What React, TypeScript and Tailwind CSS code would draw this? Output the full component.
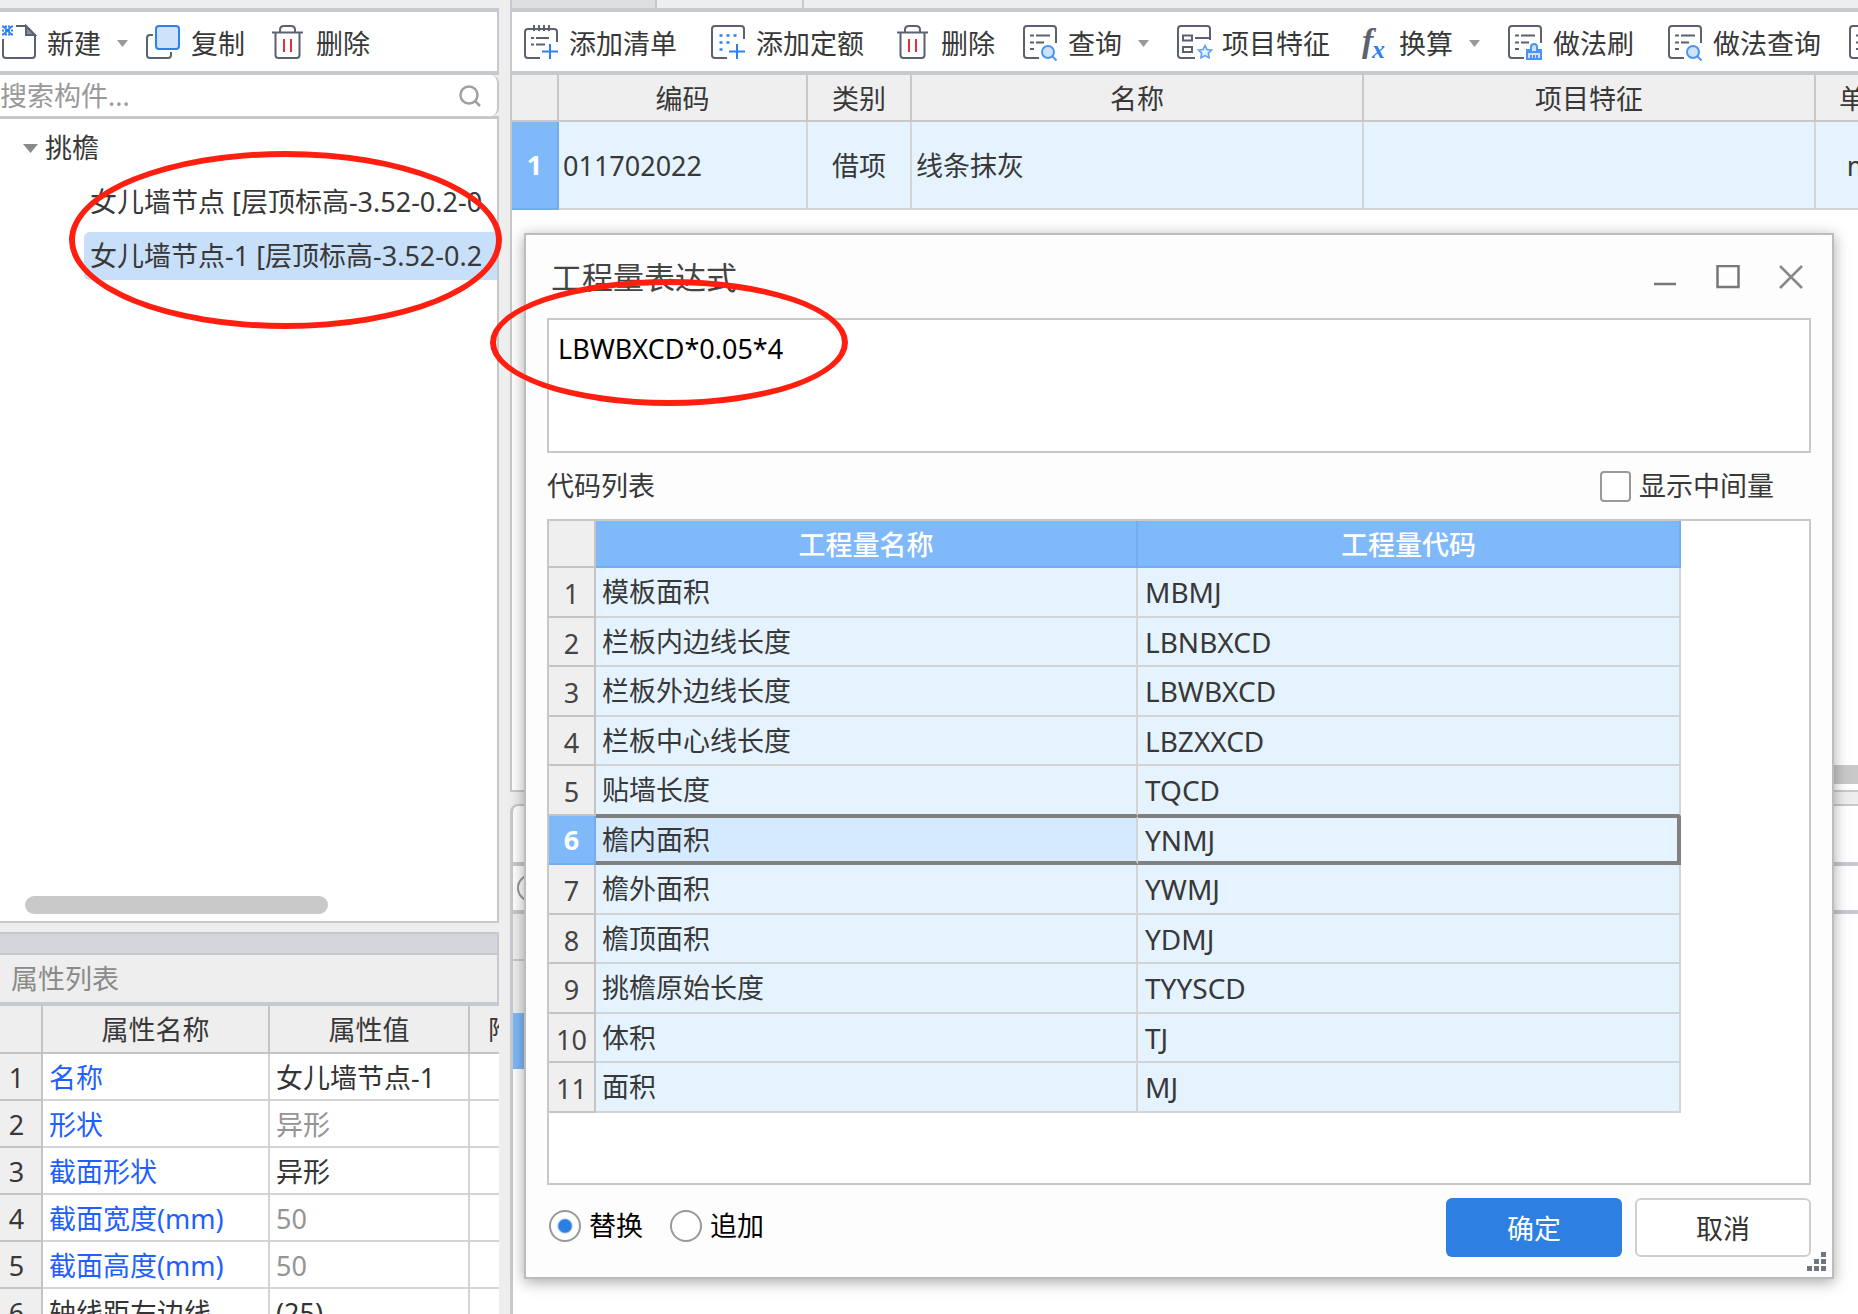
import React, { useState } from 'react'

const codes = [
    ['模板面积', 'MBMJ'],
    ['栏板内边线长度', 'LBNBXCD'],
    ['栏板外边线长度', 'LBWBXCD'],
    ['栏板中心线长度', 'LBZXXCD'],
    ['贴墙长度', 'TQCD'],
    ['檐内面积', 'YNMJ'],
    ['檐外面积', 'YWMJ'],
    ['檐顶面积', 'YDMJ'],
    ['挑檐原始长度', 'TYYSCD'],
    ['体积', 'TJ'],
    ['面积', 'MJ'],
]

const attributes = [
    { name: '名称', value: '女儿墙节点-1', nameColor: 'text-[#1f5fff]', valueColor: 'text-[#333]' },
    { name: '形状', value: '异形', nameColor: 'text-[#1f5fff]', valueColor: 'text-[#949494]' },
    { name: '截面形状', value: '异形', nameColor: 'text-[#1f5fff]', valueColor: 'text-[#333]' },
    { name: '截面宽度(mm)', value: '50', nameColor: 'text-[#1f5fff]', valueColor: 'text-[#949494]' },
    { name: '截面高度(mm)', value: '50', nameColor: 'text-[#1f5fff]', valueColor: 'text-[#949494]' },
    { name: '轴线距左边线', value: '(25)', nameColor: 'text-[#333]', valueColor: 'text-[#333]' },
]

const Svg: React.FC<{ children: React.ReactNode }> = ({ children }) => (
    <svg className="w-[34px] h-[34px] shrink-0 overflow-visible" viewBox="0 0 34 34" fill="none" stroke="#5b6170" strokeWidth="2">
        {children}
    </svg>
)

const NewIcon = () => (
    <Svg>
        <path d="M1 14v16q0 3 3 3h26q3 0 3-3V11L24 1H14" />
        <path d="M24 1v9h9z" fill="#8b909b" />
        <path d="M0 1.500h11M0 5.500h11M0 9.500h11" stroke="#2b82ee" strokeWidth="2" strokeDasharray="2 1" />
        <path d="M1.500 1.500l8 8M9.500 1.500l-8 8" stroke="#2b82ee" strokeWidth="1.800" />
    </Svg>
)

const CopyIcon = () => (
    <Svg>
        <path d="M7 10H4q-3 0-3 3v17q0 3 3 3h18q3 0 3-3v-3" />
        <rect x="10" y="1" width="23" height="23" rx="3" fill="#cfe2fb" stroke="#2b82ee" />
    </Svg>
)

const TrashIcon = () => (
    <Svg>
        <path d="M9 7V5q0-4 4-4h7q4 0 4 4v2M1 7.500h31M4.500 8v22q0 3 3 3h18q3 0 3-3V8" />
        <path d="M13 14v13M20 14v13" stroke="#e8303a" />
    </Svg>
)

const AddListIcon = () => (
    <Svg>
        <path d="M33 17V7q0-3-3-3H4Q1 4 1 7v23q0 3 3 3h12M10 0v6M15 0v6M20 0v6M25 0v6" />
        <path d="M7 13h3M12 13h13M7 19.500h3M12 19.500h9" />
        <path d="M26 19v15M18 26.500h16" stroke="#2b82ee" />
    </Svg>
)

const AddQuotaIcon = () => (
    <Svg>
        <path d="M33 14V4q0-3-3-3H4Q1 1 1 4v26q0 3 3 3h12" />
        <path d="M8.500 10.500h3M15.500 10.500h3M22.500 10.500h3M8.500 17.500h3M15.500 17.500h3M8.500 24.500h3" stroke="#2b82ee" strokeWidth="2.500" />
        <path d="M26 19v15M18 26.500h16" stroke="#2b82ee" />
    </Svg>
)

const SheetPaths = () => (
    <>
        <path d="M33 18V4q0-3-3-3H4Q1 1 1 4v26q0 3 3 3h12" />
        <path d="M7 10.500h4M13 10.500h14M7 17.500h4M13 17.500h8M7 24h4" />
    </>
)

const QueryIcon = () => (
    <Svg>
        <SheetPaths />
        <circle cx="25" cy="27" r="6" fill="#cfe2fb" stroke="#4c94f3" />
        <path d="M29.500 31.500l4 4" stroke="#4c94f3" />
    </Svg>
)

const BrushIcon = () => (
    <Svg>
        <SheetPaths />
        <path d="M19 34v-9h4v-3q0-3 3-3t3 3v3h4v9zM23 34v-4M26 34v-4M29 34v-4M19 27h14" fill="#cfe2fb" stroke="#4c94f3" />
    </Svg>
)

const FeatureIcon = () => (
    <Svg>
        <path d="M33 15V4q0-3-3-3H4Q1 1 1 4v26q0 3 3 3h14" />
        <path d="M6 10.500h9v5H6zM6 22h9v5H6zM18 13h15" />
        <path d="M28 20.500l2 4 4.500.6-3.200 3.100.8 4.600-4.100-2.200-4.100 2.200.8-4.600-3.200-3.100 4.500-.6z" fill="#e3effd" stroke="#5fa0f5" strokeWidth="1.600" />
    </Svg>
)

const FxIcon = () => (
    <Svg>
        <text x="8" y="27" fontFamily="Liberation Serif" fontStyle="italic" fontWeight="bold" fontSize="34" fill="#5b6170" stroke="none">f</text>
        <text x="18" y="33" fontFamily="Liberation Serif" fontStyle="italic" fontWeight="bold" fontSize="26" fill="#2b82ee" stroke="none">x</text>
    </Svg>
)

interface ToolProps {
    icon: React.ReactNode
    label: string
    menu?: boolean
    className?: string
}

const Tool: React.FC<ToolProps> = ({ icon, label, menu, className = '' }) => (
    <button className={'flex items-center shrink-0 whitespace-nowrap ' + className}>
        {icon}
        <span className="ml-[11px] pt-1">{label}</span>
        {menu && <svg className="ml-4 mt-1 w-[11px] h-[7px]" viewBox="0 0 11 7"><path d="M0 0h11L5.500 7z" fill="#999" /></svg>}
    </button>
)

const LeftPane = () => (
    <div className="w-[499px] shrink-0 flex flex-col">
        <div className="h-2" />
        <div className="h-[67px] border-y-4 border-r-2 border-[#c6c9cd] bg-white flex items-center gap-[18px] pl-[2px]">
            <Tool icon={<NewIcon />} label="新建" menu />
            <Tool icon={<CopyIcon />} label="复制" className="mr-2" />
            <Tool icon={<TrashIcon />} label="删除" />
        </div>
        <label className="h-[41px] bg-white border-r-2 border-[#c8c8c8] rounded-r-lg flex items-center pr-4">
            <input className="flex-1 min-w-0 outline-none placeholder:text-[#999]" placeholder="搜索构件..." aria-label="搜索构件" />
            <svg className="w-[22px] h-[22px]" viewBox="0 0 22 22" fill="none" stroke="#a0a0a0" strokeWidth="2.500">
                <circle cx="10" cy="10" r="8.500" />
                <path d="M16 16l5 5" />
            </svg>
        </label>
        <div className="flex-1 bg-white border-t-3 border-r-2 border-b-2 border-[#c8c8c8] flex flex-col overflow-hidden">
            <ul className="pt-0.5 whitespace-nowrap">
                <li className="h-[54px] flex items-center pl-[23px]">
                    <svg className="w-[15px] h-[9px] mr-[7px]" viewBox="0 0 15 9"><path d="M0 0h15L7.500 9z" fill="#8a8a8a" /></svg>
                    挑檐
                </li>
                <li className="h-[54px] flex items-center pl-[90px]">女儿墙节点 [层顶标高-3.52-0.2-0.</li>
                <li className="h-[54px] flex items-center pl-[84px]">
                    <div className="flex-1 h-12 flex items-center pl-1.5 rounded-l-md bg-[#c8dff9]">女儿墙节点-1 [层顶标高-3.52-0.2</div>
                </li>
            </ul>
            <div className="mt-auto ml-[25px] mb-[7px] w-[303px] h-[18px] rounded-full bg-[#c9c9c9]" />
        </div>
        <div className="mt-[9px] h-[23px] bg-[#d3d5db] border-2 border-l-0 border-[#c6c9cd]" />
        <h2 className="h-[51px] border-r-2 border-b-4 border-[#c6c9cd] flex items-center pl-[11px] text-[#8a8a8a]">属性列表</h2>
        <div className="h-[308px] overflow-hidden">
            <table className="w-[562px] table-fixed border-separate border-spacing-0">
                <colgroup>
                    <col className="w-[43px]" />
                    <col className="w-[227px]" />
                    <col className="w-[200px]" />
                    <col />
                </colgroup>
                <thead>
                    <tr className="h-12">
                        {['', '属性名称', '属性值', '附加'].map((h, i) => (
                            <th key={i} className="p-0 pt-0.5 font-normal border-r-2 border-b-2 border-[#c4c4c4]">{h}</th>
                        ))}
                    </tr>
                </thead>
                <tbody>
                    {attributes.map((a, i) => (
                        <tr key={a.name} className="h-[47px] bg-white">
                            <td className="p-0 pr-2 pt-0.5 text-center bg-[#efefef] border-r-2 border-b-2 border-[#c4c4c4]">{i + 1}</td>
                            <td className={'p-0 pl-1.5 pt-0.5 border-r-2 border-b-2 border-[#d4d4d4] ' + a.nameColor}>{a.name}</td>
                            <td className={'p-0 pl-1.5 pt-0.5 border-r-2 border-b-2 border-[#d4d4d4] ' + a.valueColor}>{a.value}</td>
                            <td className="p-0 border-b-2 border-[#d4d4d4]" />
                        </tr>
                    ))}
                </tbody>
            </table>
        </div>
    </div>
)

const RightPane = () => (
    <div className="ml-[11px] flex-1 min-w-0 flex flex-col overflow-hidden">
        <div className="h-2 flex">
            <div className="w-[147px] bg-[#dedede] border-x-2 border-[#c6c9cd]" />
            <div className="w-[147px] border-r-2 border-[#c6c9cd]" />
        </div>
        <div className="h-[67px] shrink-0 border-y-4 border-l-2 border-[#c6c9cd] bg-white flex items-center gap-7 pl-3">
            <Tool icon={<AddListIcon />} label="添加清单" className="mr-1.5" />
            <Tool icon={<AddQuotaIcon />} label="添加定额" className="mr-1" />
            <Tool icon={<TrashIcon />} label="删除" />
            <Tool icon={<QueryIcon />} label="查询" menu />
            <Tool icon={<FeatureIcon />} label="项目特征" />
            <Tool icon={<FxIcon />} label="换算" menu className="-ml-1" />
            <Tool icon={<BrushIcon />} label="做法刷" className="mr-1.5" />
            <Tool icon={<QueryIcon />} label="做法查询" />
            <Tool icon={<QueryIcon />} label="" />
        </div>
        <div className="flex-1 flex flex-col bg-white border-l-2 border-b-2 border-[#c8c8c8]">
            <table className="w-[1406px] table-fixed border-separate border-spacing-0">
                <colgroup>
                    <col className="w-[47px]" />
                    <col className="w-[249px]" />
                    <col className="w-[104px]" />
                    <col className="w-[452px]" />
                    <col className="w-[452px]" />
                    <col />
                </colgroup>
                <thead>
                    <tr className="h-[47px] bg-[#efefef]">
                        {['', '编码', '类别', '名称', '项目特征', '单位'].map((h, i) => (
                            <th key={i} className="p-0 pt-0.5 font-normal border-r-2 border-b-2 border-[#c8c8c8]">{h}</th>
                        ))}
                    </tr>
                </thead>
                <tbody>
                    <tr className="h-[88px] bg-[#e5f3ff]">
                        <td className="p-0 text-center font-bold text-white bg-[#7fb9f9] border-r-2 border-b-2 border-[#72aeef]">1</td>
                        <td className="p-0 pl-1 pt-0.5 border-r-2 border-b-2 border-[#d4d4d4]">011702022</td>
                        <td className="p-0 pt-0.5 text-center border-r-2 border-b-2 border-[#d4d4d4]">借项</td>
                        <td className="p-0 pl-1 pt-0.5 border-r-2 border-b-2 border-[#d4d4d4]">线条抹灰</td>
                        <td className="p-0 border-r-2 border-b-2 border-[#d4d4d4]" />
                        <td className="p-0 pt-0.5 text-center border-b-2 border-[#d4d4d4]">m2</td>
                    </tr>
                </tbody>
            </table>
            <div className="mt-auto ml-auto mb-1.5 w-1/2 h-[19px] bg-[#c9c9c9]" />
        </div>
        <div className="mt-3 h-[510px] shrink-0 flex flex-col bg-white border-t-2 border-l-3 border-[#c6c9cd] rounded-tl-lg">
            <div className="h-[60px] border-b-4 border-[#c6c9cd]" />
            <div className="h-12 flex items-center pl-1 border-b-4 border-[#c6c9cd]">
                <div className="w-7 h-7 rounded-full border-2 border-[#999]" />
            </div>
            <div className="w-[47px] h-[47px] bg-[#efefef] border-b-2 border-[#c8c8c8]" />
            <div className="w-[47px] h-[52px] bg-[#efefef]" />
            <div className="w-[47px] h-[56px] bg-[#7fb9f9]" />
        </div>
    </div>
)

const Dialog = () => {
    const [expr, setExpr] = useState('LBWBXCD*0.05*4')
    const [mode, setMode] = useState('replace')
    const [middle, setMiddle] = useState(false)
    const selected = 5
    const radio = 'appearance-none w-8 h-8 rounded-full border-2 border-[#999] bg-white mr-2 checked:bg-[radial-gradient(circle,#2b7fe3_6px,#fff_8px)]'

    return (
        <div role="dialog" aria-label="工程量表达式" className="absolute left-[524px] right-6 top-[233px] bg-[#fdfdfd] border-2 border-[#bcbcbc] shadow-[0_3px_14px_rgba(0,0,0,0.35)] px-[21px] pb-5">
            <div className="h-[83px] flex items-center pl-1 pr-2 text-[#444]">
                <h1 className="text-[31px]">工程量表达式</h1>
                <div className="ml-auto flex items-center gap-[39px]">
                    <button aria-label="最小化"><svg className="w-6 h-6" viewBox="0 0 24 24"><path d="M1 19h22" stroke="#777" strokeWidth="2.500" /></svg></button>
                    <button aria-label="最大化"><svg className="w-6 h-6" viewBox="0 0 24 24"><rect x="1.500" y="1" width="21" height="21" fill="none" stroke="#777" strokeWidth="2.500" /></svg></button>
                    <button aria-label="关闭"><svg className="w-6 h-6" viewBox="0 0 24 24"><path d="M1 1l22 22M23 1L1 23" stroke="#888" strokeWidth="2.500" /></svg></button>
                </div>
            </div>
            <textarea
                aria-label="表达式"
                className="block w-full h-[135px] resize-none outline-none border-2 border-[#c8c8c8] bg-white text-black px-[9px] py-[11px] leading-9"
                value={expr}
                onChange={e => setExpr(e.target.value)}
            />
            <div className="h-[66px] flex items-center justify-between pr-[37px]">
                <span>代码列表</span>
                <label className="flex items-center">
                    <input type="checkbox" className="appearance-none w-[31px] h-[31px] mr-2 rounded-sm border-2 border-[#999] bg-white checked:bg-[#2b7fe3]" checked={middle} onChange={e => setMiddle(e.target.checked)} />
                    显示中间量
                </label>
            </div>
            <div className="h-[666px] border-2 border-[#c8c8c8] bg-white">
                <table className="w-[1132px] table-fixed border-separate border-spacing-0">
                    <colgroup>
                        <col className="w-[47px]" />
                        <col className="w-[542px]" />
                        <col />
                    </colgroup>
                    <thead>
                        <tr className="h-[47px] text-white">
                            <th className="p-0 bg-[#efefef] border-r-2 border-b-2 border-[#c4c4c4]" />
                            <th className="p-0 pt-0.5 font-medium bg-[#7fb9f9] border-r-2 border-b-2 border-[#72aeef]">工程量名称</th>
                            <th className="p-0 pt-0.5 font-medium bg-[#7fb9f9] border-r-2 border-b-2 border-[#72aeef]">工程量代码</th>
                        </tr>
                    </thead>
                    <tbody>
                        {codes.map(([name, code], i) => {
                            let index = 'pt-1 text-[#444] bg-[#efefef] border-b-2 border-[#c4c4c4]'
                            let line = 'border-b-2 border-[#d4d4d4] border-r-2'
                            if (i === selected) {
                                index = 'font-bold text-white bg-[#7fb9f9] border-b-2 border-[#72aeef]'
                                line = 'border-y-[#808080] border-t-2 border-b-4'
                            }
                            if (i === selected - 1) line = 'border-b-2 border-b-[#808080] border-r-[#d4d4d4] border-r-2'
                            return (
                                <tr key={code} className="odd:h-[50px] even:h-[49px] bg-[#e5f3ff]">
                                    <td className={'p-0 text-center leading-8 border-r-2 ' + index}>{i + 1}</td>
                                    <td className={'p-0 pl-1.5 leading-8 ' + line + (i === selected ? ' bg-[#d5e9ff] border-r-2 border-r-[#d4d4d4]' : '')}>{name}</td>
                                    <td className={'p-0 pl-[7px] text-[28px] leading-8 ' + line + (i === selected ? ' border-r-4 border-r-[#808080]' : '')}>{code}</td>
                                </tr>
                            )
                        })}
                    </tbody>
                </table>
            </div>
            <div className="mt-[13px] h-[59px] flex items-center text-black">
                <label className="flex items-center pl-0.5 mr-[27px] pb-1">
                    <input type="radio" name="mode" className={radio} checked={mode === 'replace'} onChange={() => setMode('replace')} />
                    替换
                </label>
                <label className="flex items-center pb-1">
                    <input type="radio" name="mode" className={radio} checked={mode === 'append'} onChange={() => setMode('append')} />
                    追加
                </label>
                <button className="ml-auto mr-[13px] w-44 h-full pt-0.5 rounded-md bg-[#2d7fe2] text-white">确定</button>
                <button className="w-44 h-full pt-0.5 rounded-md border-2 border-[#cfcfcf] bg-white text-[#333]">取消</button>
            </div>
            <svg className="absolute right-1.5 bottom-1.5 w-[19px] h-[19px]" viewBox="0 0 19 19" fill="#70757f">
                <path d="M14 0h5v5h-5zM7 7h5v5H7zM14 7h5v5h-5zM0 14h5v5H0zM7 14h5v5H7zM14 14h5v5h-5z" />
            </svg>
        </div>
    )
}

export default function App() {
    return (
        <div className="relative h-screen overflow-hidden flex bg-[#eee] text-[#383838] text-[27px] leading-10 font-['Noto_Sans','Noto_Sans_CJK_SC',sans-serif]">
            <LeftPane />
            <RightPane />
            <Dialog />
            <div className="absolute left-[69px] top-[151px] w-[433px] h-[178px] rounded-[50%] border-6 border-[#ff1f10] pointer-events-none" />
            <div className="absolute left-[490px] top-[279px] w-[358px] h-[127px] rounded-[50%] border-6 border-[#ff1f10] pointer-events-none" />
        </div>
    )
}
